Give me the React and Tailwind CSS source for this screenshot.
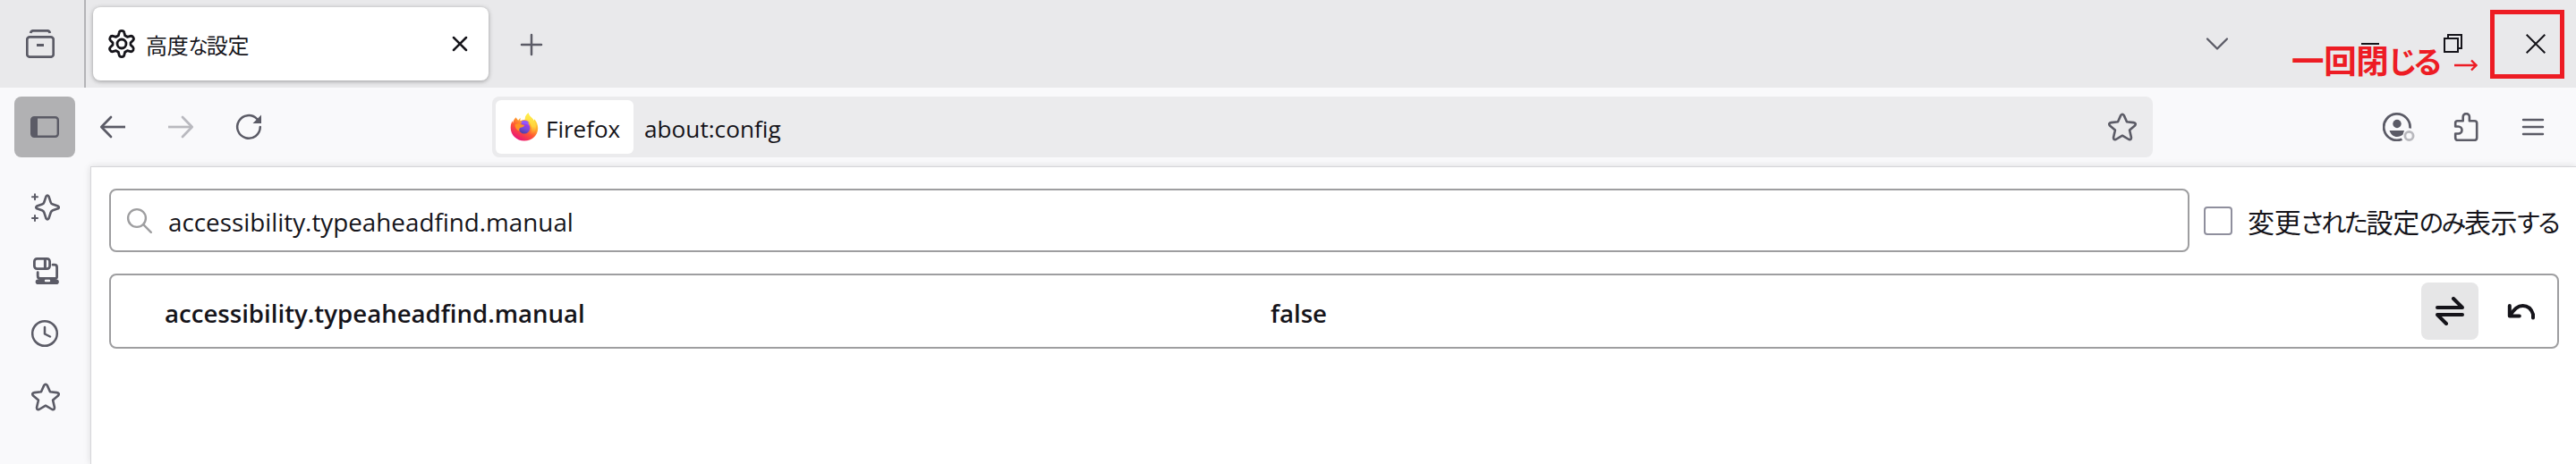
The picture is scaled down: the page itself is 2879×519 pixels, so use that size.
import clsx from 'clsx';

const LATIN = 'font-["Open_Sans","Noto_Sans_CJK_JP",sans-serif]';
const JAPANESE = 'font-["Noto_Sans_CJK_JP",sans-serif] [font-feature-settings:"palt"]';

/* ── Icons (drawn on a 32px grid) ─────────────────────────────────────────── */
const Icon = ({ children, className, stroke = 2.7 }) => (
  <svg
    viewBox="0 0 32 32"
    width="32"
    height="32"
    fill="none"
    stroke="currentColor"
    strokeWidth={stroke}
    strokeLinecap="round"
    strokeLinejoin="round"
    className={clsx('block shrink-0', className)}
  >
    {children}
  </svg>
);

const ArchiveIcon = () => (
  <Icon>
    <path d="M5.200 4C5.500 2 6.400 1.300 8 1.300h16c1.600 0 2.500.7 2.800 2.700" strokeLinecap="butt" />
    <rect x="1.300" y="8.300" width="29.400" height="22.400" rx="3" />
    <path d="M12 17.500h8" strokeWidth="3" strokeLinecap="butt" />
  </Icon>
);

const GearIcon = () => (
  <Icon stroke={2.8}>
    <path d="M13.200 3.300Q13.600 1.400 16 1.400T18.800 3.300L19.700 6.800L22.300 8.300L25.800 7.300Q27.700 6.900 28.900 8.800T28.600 12.200L26 14.700V17.300L28.600 19.800Q29.900 21.300 28.900 23.200T25.800 24.700L22.300 23.700L19.700 25.200L18.800 28.700Q18.400 30.600 16 30.600T13.200 28.700L12.300 25.200L9.700 23.700L6.200 24.700Q4.300 25.100 3.100 23.200T3.400 19.800L6 17.300V14.700L3.400 12.200Q2.100 10.700 3.100 8.800T6.200 7.300L9.700 8.300L12.300 6.800Z" />
    <circle cx="16" cy="16" r="5" />
  </Icon>
);

const CloseIcon = () => (
  <Icon stroke={2.5}>
    <path d="M9 9l14 14M23 9L9 23" />
  </Icon>
);

const PlusIcon = () => (
  <Icon stroke={2.5}>
    <path d="M16 5v22M5 16h22" />
  </Icon>
);

const ChevronIcon = () => (
  <Icon stroke={2.300}>
    <path d="M5 10.500l11 11 11-11" />
  </Icon>
);

const PanelIcon = () => (
  <Icon stroke={2.400}>
    <rect x="1.200" y="5.200" width="29.600" height="21.600" rx="3" />
    <path d="M3 5h5v22H3a2 2 0 0 1-2-2V7a2 2 0 0 1 2-2z" fill="currentColor" stroke="none" />
  </Icon>
);

const BackIcon = ({ className }) => (
  <Icon className={className}>
    <path d="M30 16H4" strokeLinecap="butt" />
    <path d="M14 5L3.300 16 14 27" />
  </Icon>
);

const ReloadIcon = () => (
  <Icon stroke={2.5}>
    <path d="M28.800 16A12.800 12.800 0 1 1 25.200 7" />
    <path d="M30 2.500v9.500h-9.500z" fill="currentColor" stroke="none" />
  </Icon>
);

const StarIcon = ({ className }) => (
  <Icon className={className} stroke={2.600}>
    <path d="M14.300 2.900Q16 .5 17.700 2.900L21 10.300L28.600 11.100Q32 11.700 30 14.600L24.100 19.600L25.900 27.500Q26.200 30.700 23.300 30L16 25.700L8.700 30Q5.800 30.700 6.100 27.500L7.900 19.600L2 14.600Q0 11.700 3.400 11.100L11 10.300Z" />
  </Icon>
);

const AccountIcon = () => (
  <svg viewBox="0 0 36 32" width="36" height="32" className="block shrink-0" fill="none">
    <path d="M30.500 17.500A14.700 14.700 0 1 0 21.500 29.700" stroke="currentColor" strokeWidth="2.800" />
    <circle cx="16" cy="12.500" r="4.700" fill="currentColor" />
    <path d="M7.500 20h16.500l-1.500 4.500c-1.700 1.600-3.900 2.500-6.500 2.500-3.800 0-7-2.500-8.500-7z" fill="currentColor" />
    <circle cx="29.500" cy="26" r="4.600" stroke="#b9b9be" strokeWidth="2.800" />
  </svg>
);

const PuzzleIcon = () => (
  <Icon stroke={2.600}>
    <path d="M4.200 14V11.500Q4.200 9.200 6.500 9.200H12.700V4.700a3.600 3.600 0 0 1 7.200 0V9.200H25.500Q28.200 9.200 28.200 11.800V28Q28.200 30.800 25.500 30.800H6.800Q4.200 30.800 4.200 28V23.500H7.500a4 4 0 0 0 0-8H4.200Z" />
  </Icon>
);

const MenuIcon = () => (
  <Icon stroke={2.400}>
    <path d="M5 8h22M5 16h22M5 24h22" />
  </Icon>
);

const SparkleIcon = () => (
  <Icon stroke={2.600}>
    <path d="M16.500 3.600Q18 1.300 19.500 3.600L21.700 10.300Q22.300 12 24 12.600L29.800 14.600Q31.800 16 29.800 17.300L24 19.300Q22.300 20 21.700 21.700L19.500 28.300Q18 30.500 16.500 28.300L14.300 21.700Q13.700 20 12 19.300L6.200 17.300Q4.200 16 6.200 14.600L12 12.600Q13.700 12 14.300 10.300Z" />
    <path d="M4 1.200v6M1 4.200h6M4 25v6M1 28h6" strokeWidth="2" />
  </Icon>
);

const DevicesIcon = () => (
  <Icon stroke={2.800}>
    <rect x="3.400" y="2.400" width="17.200" height="11.200" rx="3" />
    <path d="M15.400 3v10" strokeWidth="3" />
    <path d="M24 9.200h1.800q2.800 0 2.800 2.800v10.500q0 2-2 2H10q-2.800 0-2.800-2.800v-4" />
    <path d="M7.500 28.200h20.500" strokeWidth="5.600" />
    <path d="M16 27h4" stroke="#f9f9fb" strokeWidth="2.400" />
  </Icon>
);

const ClockIcon = () => (
  <Icon stroke={2.5}>
    <circle cx="15" cy="16" r="13.800" />
    <path d="M15 9v7.500l6 3" />
  </Icon>
);

const SearchIcon = () => (
  <Icon stroke={2.400}>
    <circle cx="13" cy="13" r="9.900" />
    <path d="M20.200 20.200l8.600 8.600" />
  </Icon>
);

const ToggleIcon = () => (
  <Icon stroke={4}>
    <path d="M2 12h28L20 2M30 20H2l10 10" />
  </Icon>
);

const UndoIcon = () => (
  <Icon stroke={4}>
    <path d="M2.800 10v11.500h11" />
    <path d="M3.500 21Q9.500 10 17.500 10q8.500 0 11.500 9.500v4" />
  </Icon>
);

const FirefoxLogo = () => (
  <svg viewBox="0 0 32 32" width="32" height="32" className="block shrink-0">
    <defs>
      <linearGradient id="fxBody" x1=".85" y1=".1" x2=".3" y2="1">
        <stop offset="0" stopColor="#fff44f" />
        <stop offset=".35" stopColor="#ffa82a" />
        <stop offset=".62" stopColor="#ff5634" />
        <stop offset="1" stopColor="#e9107c" />
      </linearGradient>
      <linearGradient id="fxFlame" x1=".6" y1="0" x2=".5" y2="1">
        <stop offset="0" stopColor="#fff44f" />
        <stop offset=".6" stopColor="#ffd23c" />
        <stop offset="1" stopColor="#ff9a2b" stopOpacity="0" />
      </linearGradient>
      <linearGradient id="fxGlobe" x1=".7" y1="0" x2=".3" y2="1">
        <stop offset="0" stopColor="#b833e1" />
        <stop offset=".5" stopColor="#7a4be0" />
        <stop offset="1" stopColor="#4b3f9e" />
      </linearGradient>
    </defs>
    <path fill="url(#fxBody)" d="M6.500 5.200l2.600 3.500 2.500-2.900-.2 3.500c2-1.200 4-1.600 5.600-1.200C16.700 5 18 2.300 20.500.3c.8 3 2.300 4.200 4.500 6.200l1.500 3 .8-2.300c2.500 2.600 4 6.500 3.900 10.300C31 25.700 24.600 31.500 16 31.500S.8 25.300.7 17c0-3.200.6-5.500 2-7.700l.3 2.700c.6-2.700 1.800-5 3.500-6.800z" />
    <path fill="url(#fxFlame)" d="M20.500.3c.8 3 2.300 4.200 4.500 6.200 3.500 4 4.800 8 3.500 13-1.200 3.500-4 5-6 5 3-5.500 1.500-12-2.500-15.500-1.200-.8-2.200-1-3.500-1 .2-2.800 1.500-5.700 4-7.700z" />
    <circle cx="16" cy="17.200" r="6.300" fill="url(#fxGlobe)" />
    <path fill="#9059ff" d="M12 10.500c2.500-2.600 7.500-2.500 9.500.8l-2 .2c1.600 1 2.200 2.500 2 4-1.500-2.500-4-3.300-6.500-3z" />
    <path fill="#ff9322" d="M5.500 13.500c2-1.200 4.300-1.600 6.500-.8 1.400.9 2.600 1 4.200 1.200-.6 2.300-2.800 2.400-4.500 2.900-1.400.6-1.700 2.300-1.200 4-3.500-1.500-5-4-5-7.300z" />
  </svg>
);

/* UI label with kana set narrower than the kanji around it */
const Label = ({ text, className }) => (
  <span className={clsx(JAPANESE, 'whitespace-nowrap', className)}>
    {text.split(/([\u3040-\u30ff]+)/).map((part, i) => (
      <span key={i} className={i % 2 ? 'text-[0.93em] tracking-[-0.075em]' : 'tracking-[-0.01em]'}>
        {part}
      </span>
    ))}
  </span>
);

/* ── Browser chrome ───────────────────────────────────────────────────────── */
const TitleBar = () => (
  <header className="relative flex h-[98px] items-center bg-[#e9e9eb] text-[#5b5b66]">
    <div className="flex h-full w-24 items-center border-r-2 border-[#b4b4b7] pl-[29px]">
      <ArchiveIcon />
    </div>

    <div className="ml-2 flex h-[82px] w-[442px] items-center rounded-lg bg-white px-4 text-[#15141a] shadow-[0_1px_5px_rgba(0,0,0,0.35)]">
      <GearIcon />
      <Label text="高度な設定" className="mt-0.5 ml-[11px] flex-1 text-[24px] leading-8" />
      <CloseIcon />
    </div>

    <div className="mt-0.5 ml-8">
      <PlusIcon />
    </div>

    <div className="ml-auto flex items-center">
      <ChevronIcon />
      <div className="ml-[145px] h-0.5 w-5 bg-[#15141a]" />
      <svg width="22" height="22" viewBox="0 0 22 22" fill="none" stroke="#15141a" strokeWidth="2" className="ml-[72px]">
        <path d="M5 5V1h15v15h-4M1 5h15v15H1z" />
      </svg>
      <svg width="22" height="22" viewBox="0 0 22 22" fill="none" stroke="#15141a" strokeWidth="2" className="mr-[34px] ml-[70px]">
        <path d="M.7.700l20.600 20.600M21.300.700L.7 21.300" />
      </svg>
    </div>

    {/* Red note pointing at the window's close button */}
    <div className="absolute top-[11px] right-[13px] h-[77px] w-[83px] border-[5px] border-[#ed1c24]" />
    <div className="absolute top-[42px] left-[2561px] flex items-center text-[#ed1c24]">
      <Label text="一回閉じる" className="w-[182px] text-[36.5px] leading-[50px] font-bold" />
      <svg width="26" height="14" viewBox="0 0 26 14" fill="none" stroke="currentColor" strokeWidth="2.400" className="mt-2.5">
        <path d="M0 7h24M19 1.500L24.500 7 19 12.500" />
      </svg>
    </div>
  </header>
);

const NavBar = () => (
  <nav className="flex h-[88px] items-center bg-[#f9f9fb] text-[#5b5b66]">
    <div className="ml-4 flex size-[68px] items-center justify-center rounded-lg bg-[#b1b1b3]">
      <PanelIcon />
    </div>
    <div className="ml-[26px] flex gap-11">
      <BackIcon />
      <BackIcon className="rotate-180 opacity-40" />
      <ReloadIcon />
    </div>

    <div className={clsx(LATIN, 'ml-[256px] flex h-[68px] w-[1856px] items-center rounded-lg bg-[#ebebed] p-1 text-[26.2px] leading-9 text-[#15141a]')}>
      <div className="flex h-[60px] w-[154px] items-center rounded-md bg-white pl-4">
        <FirefoxLogo />
        <span className="mt-1 ml-2 text-[26px]">Firefox</span>
      </div>
      <span className="mt-1 ml-3 flex-1">about:config</span>
      <StarIcon className="mr-[14px] text-[#5b5b66]" />
    </div>

    <div className="ml-auto flex items-center pr-8">
      <AccountIcon />
      <div className="ml-[41px]">
        <PuzzleIcon />
      </div>
      <div className="ml-[43px]">
        <MenuIcon />
      </div>
    </div>
  </nav>
);

const Sidebar = () => (
  <aside className="flex w-[101px] shrink-0 flex-col gap-[38.5px] bg-[#f9f9fb] pt-[30px] pl-[35px] text-[#5b5b66]">
    <SparkleIcon />
    <DevicesIcon />
    <ClockIcon />
    <StarIcon />
  </aside>
);

/* ── about:config ─────────────────────────────────────────────────────────── */
const ConfigPage = () => (
  <main className={clsx(LATIN, 'flex flex-1 flex-col border-t border-l border-[#d6d6d9] bg-white pt-6 pr-[19px] pl-5 text-[#15141a] shadow-[0_0_8px_rgba(0,0,0,0.12)]')}>
    <div className="flex items-center">
      <div className="flex h-[71px] w-[2325px] shrink-0 items-center rounded-lg border-2 border-[#9e9ea0] pl-4">
        <div className="text-[#9e9ea0]">
          <SearchIcon />
        </div>
        <span className="mt-0.5 ml-4 text-[27.8px] leading-9">accessibility.typeaheadfind.manual</span>
      </div>
      <div className="ml-4 size-8 shrink-0 rounded border-2 border-[#8f8f9d]" />
      <Label text="変更された設定のみ表示する" className="mt-0.5 ml-[17px] text-[30px] leading-10" />
    </div>

    <div className="mt-6 flex h-[84px] items-center rounded-lg border-2 border-[#9e9ea0] pr-6 pl-[60px] text-[27.6px] leading-9 font-semibold">
      <span className="mt-1 w-[1236px]">accessibility.typeaheadfind.manual</span>
      <span className="mt-1 flex-1">false</span>
      <div className="flex size-16 items-center justify-center rounded-lg bg-[#e6e6e7]">
        <ToggleIcon />
      </div>
      <div className="ml-8">
        <UndoIcon />
      </div>
    </div>
  </main>
);

export default function App() {
  return (
    <div className="flex h-[519px] w-[2879px] flex-col overflow-hidden bg-[#f9f9fb]">
      <TitleBar />
      <NavBar />
      <div className="flex flex-1">
        <Sidebar />
        <ConfigPage />
      </div>
    </div>
  );
}
